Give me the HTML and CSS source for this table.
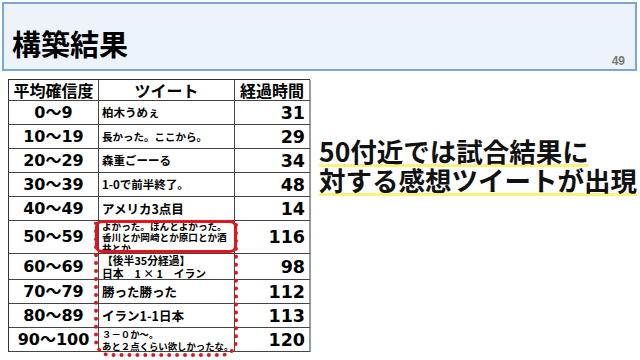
FILE: index.html
```html
<!DOCTYPE html>
<html lang="ja">
<head>
<meta charset="utf-8">
<title>構築結果</title>
<link rel="stylesheet" href="styles.css">
</head>
<body>
<div class="slide">
  <header class="title-bar">
    <h1 class="title">構築結果</h1>
    <span class="page-no">49</span>
  </header>
  <main class="content">
    <div class="table-wrap">
      <div class="grid">
        <div class="cell head">平均確信度</div>
        <div class="cell head">ツイート</div>
        <div class="cell head last">経過時間</div>

        <div class="cell range">0～9</div>
        <div class="cell tw t11">柏木うめぇ</div>
        <div class="cell num last">31</div>

        <div class="cell range">10～19</div>
        <div class="cell tw t10">長かった。ここから。</div>
        <div class="cell num last">29</div>

        <div class="cell range">20～29</div>
        <div class="cell tw t11">森重ごーーる</div>
        <div class="cell num last">34</div>

        <div class="cell range">30～39</div>
        <div class="cell tw t11">1-0で前半終了。</div>
        <div class="cell num last">48</div>

        <div class="cell range">40～49</div>
        <div class="cell tw t12">アメリカ3点目</div>
        <div class="cell num last">14</div>

        <div class="cell range">50～59</div>
        <div class="cell tw t9">よかった。ほんとよかった。<br>香川とか岡崎とか原口とか酒<br>井とか。</div>
        <div class="cell num last">116</div>

        <div class="cell range">60～69</div>
        <div class="cell tw t11m">【後半35分経過】<br>日本　1 × 1　イラン</div>
        <div class="cell num last">98</div>

        <div class="cell range">70～79</div>
        <div class="cell tw t12">勝った勝った</div>
        <div class="cell num last">112</div>

        <div class="cell range">80～89</div>
        <div class="cell tw t12">イラン1-1日本</div>
        <div class="cell num last">113</div>

        <div class="cell range">90～100</div>
        <div class="cell tw t9b">３－０か～。<br>あと２点くらい欲しかったな。</div>
        <div class="cell num last">120</div>
      </div>
      <div class="mark-dotted"></div>
      <div class="mark-solid"></div>
    </div>
    <div class="note">
      <div class="note-line"><span class="hl">50付近では試合結果に</span></div>
      <div class="note-line"><span class="hl">対する感想ツイートが出現</span></div>
    </div>
  </main>
</div>
</body>
</html>
```

FILE: styles.css
```css
html, body {
  margin: 0;
  padding: 0;
  background: #ffffff;
}

body {
  font-family: "DejaVu Sans", "Noto Sans CJK JP", sans-serif;
  color: #000;
}

.slide {
  width: 640px;
  height: 360px;
  overflow: hidden;
}

.title-bar {
  margin: 2px 3px 0 2px;
  height: 65px;
  border: 2px solid #7ba6d8;
  background: #edf3fb;
  display: flex;
  justify-content: space-between;
  align-items: flex-end;
  padding: 0 10px 0 8px;
}

.title {
  margin: 0 0 9px;
  font: 700 29px/33px "Noto Sans CJK JP", sans-serif;
  color: #000;
}

.page-no {
  font: 700 12px/13px "Liberation Sans", sans-serif;
  color: #7a7a7a;
  margin-bottom: 1px;
}

.content {
  display: flex;
  padding: 8px 0 0 8px;
  gap: 9px;
}

.table-wrap {
  position: relative;
  width: 302px;
  flex: none;
}

.grid {
  display: grid;
  grid-template-columns: 90px 136px 76px;
  grid-template-rows: 21px 24px 24px 24px 24px 24px 33px 26px 24px 24px 24px;
  border-top: 1px solid #333;
  border-left: 1px solid #333;
}

.cell {
  box-sizing: border-box;
  border-right: 1px solid #444;
  border-bottom: 1px solid #444;
  display: flex;
  align-items: center;
  min-width: 0;
  white-space: nowrap;
}

.cell.last {
  border-right: 2px solid #9a9a9a;
}

.head {
  justify-content: center;
  font: 700 16px/20px "Noto Sans CJK JP", sans-serif;
}

.range {
  justify-content: center;
  font-weight: 700;
  font-size: 16px;
  line-height: 20px;
}

.num {
  justify-content: flex-end;
  padding-right: 4px;
  font-weight: 700;
  font-size: 17.5px;
  line-height: 20px;
}

.tw {
  padding-left: 3px;
  font-weight: 700;
  font-family: "Noto Sans CJK JP", sans-serif;
}

.t10 { font-size: 10.5px; line-height: 12px; }
.t11 { font-size: 11.5px; line-height: 13px; }
.t12 { font-size: 12.5px; line-height: 14px; }
.t9 { font-size: 9.6px; line-height: 11px; }
.t9b { font-size: 9.4px; line-height: 12px; }
.t11m { font-size: 10.8px; line-height: 13px; }

.mark-solid {
  position: absolute;
  left: 87px;
  top: 141px;
  width: 142px;
  height: 33px;
  box-sizing: border-box;
  border: 3px solid #e3141c;
  border-radius: 7px;
}

.mark-dotted {
  position: absolute;
  left: 86px;
  top: 143px;
  width: 144px;
  height: 135px;
  box-sizing: border-box;
  border: 4px dotted #e3141c;
  border-top: 0;
  border-radius: 0 0 16px 16px;
}

.note {
  margin-top: 57px;
  font: 700 26.5px/29px "Noto Sans CJK JP", sans-serif;
  white-space: nowrap;
  color: #111;
}

.hl {
  text-decoration: underline;
  text-decoration-color: #fff07a;
  text-decoration-thickness: 3px;
  text-underline-offset: 2px;
}
```
